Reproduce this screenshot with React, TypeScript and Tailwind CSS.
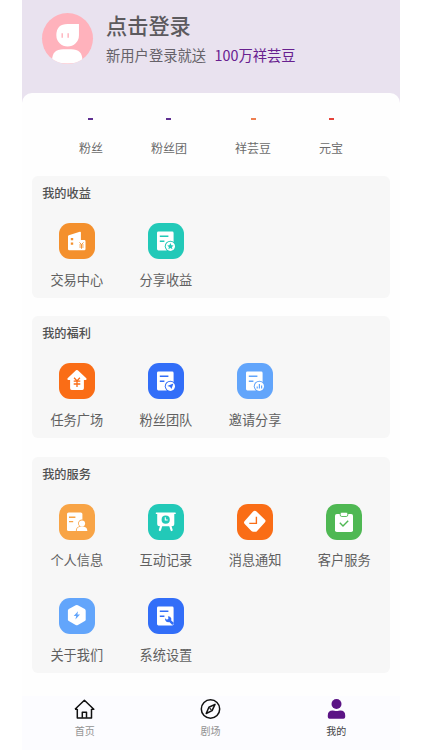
import type { ReactNode } from 'react';
import clsx from 'clsx';

type Entry = {
  label: string;
  color: string;
  icon: ReactNode;
};

type Section = {
  title: string;
  className: string;
  entries: Entry[];
};

const stats = [
  { label: '粉丝', color: 'bg-[#5f2f91]' },
  { label: '粉丝团', color: 'bg-[#5f2f91]' },
  { label: '祥芸豆', color: 'bg-[#ee7f50]' },
  { label: '元宝', color: 'bg-[#e5433a]' },
];

// Sheet of paper with two text lines; shared by most of the tiles.
function Sheet({ children }: { children?: ReactNode }) {
  return (
    <>
      <rect x="9" y="8.5" width="16.6" height="18.9" rx="1.4" fill="#fff" />
      <path d="M11.8 13.2h8.6M11.8 18.2h4.6" stroke="currentColor" strokeWidth="1.4" />
      {children}
    </>
  );
}

function Badge({ children }: { children: ReactNode }) {
  return (
    <>
      <circle cx="22.4" cy="23.3" r="5.6" fill="currentColor" />
      <circle cx="22.4" cy="23.3" r="4.6" fill="#fff" />
      {children}
    </>
  );
}

const sections: Section[] = [
  {
    title: '我的收益',
    className: 'h-[122px]',
    entries: [
      {
        label: '交易中心',
        color: 'text-[#f4902d]',
        icon: (
          <>
            <path
              d="M9 13.3q0-.8.8-1.1l11-3.5q1.1-.3 1.1.9V17h3.4q1.2 0 1.2 1.2V26q0 1.2-1.2 1.2H10.2Q9 27.2 9 26z"
              fill="#fff"
            />
            <path d="M11.8 15h2.4v2.2h-2.4zM11.8 19.4h2.4v2.4h-2.4z" fill="currentColor" />
            <path
              d="M20.5 19.4l2 2.2 2-2.2M22.5 21.6v4.2M20.3 22h4.4M20.3 24h4.4"
              stroke="currentColor"
              strokeWidth=".9"
            />
          </>
        ),
      },
      {
        label: '分享收益',
        color: 'text-[#22c9b8]',
        icon: (
          <Sheet>
            <Badge>
              <path
                d="M22.4 20.1l1 2.1 2.2.2-1.7 1.5.5 2.3-2-1.2-2 1.2.5-2.3-1.7-1.5 2.2-.2z"
                fill="currentColor"
              />
            </Badge>
          </Sheet>
        ),
      },
    ],
  },
  {
    title: '我的福利',
    className: 'h-[122px]',
    entries: [
      {
        label: '任务广场',
        color: 'text-[#fa6d16]',
        icon: (
          <>
            <path
              d="M17 7.3q.9-.8 1.8 0l8.5 8q1 1.4-.5 1.6h-1.9v8.4q0 1.6-1.6 1.6H12.7q-1.6 0-1.6-1.6v-8.4H9.2q-1.6-.2-.6-1.6z"
              fill="#fff"
            />
            <path
              d="M15.1 14.7l2.9 3.2 2.9-3.2M18 17.9v6.2M14.7 18.1h6.6M14.7 21h6.6"
              stroke="currentColor"
              strokeWidth="1.3"
            />
          </>
        ),
      },
      {
        label: '粉丝团队',
        color: 'text-[#326ef8]',
        icon: (
          <Sheet>
            <Badge>
              <path d="M25.4 20.5l-1.9 5.6-1.5-2.4-2.8-.8z" fill="currentColor" />
            </Badge>
          </Sheet>
        ),
      },
      {
        label: '邀请分享',
        color: 'text-[#62a5fb]',
        icon: (
          <Sheet>
            <Badge>
              <path d="M20.2 25.5v-2M22.4 25.5v-4.6M24.6 25.5v-2.9" stroke="currentColor" strokeWidth="1.2" />
            </Badge>
          </Sheet>
        ),
      },
    ],
  },
  {
    title: '我的服务',
    className: 'h-[216px]',
    entries: [
      {
        label: '个人信息',
        color: 'text-[#f8a446]',
        icon: (
          <>
            <rect x="8" y="8.4" width="15.4" height="18.6" rx="1.6" fill="#fff" />
            <path d="M10 13.2h6.4M10 17.6h4.2" stroke="currentColor" strokeWidth="1.4" />
            <path d="M20.4 22.3a3.9 3.9 0 1 1 5.2 0q3 .9 3 5.2H16.8q0-4.3 3.6-5.2z" fill="currentColor" />
            <circle cx="23" cy="19.6" r="3.1" fill="#fff" />
            <path d="M17.7 27q0-3.9 3.3-4.2h4q3.3.3 3.3 4.2z" fill="#fff" />
          </>
        ),
      },
      {
        label: '互动记录',
        color: 'text-[#22c9b8]',
        icon: (
          <>
            <path
              d="M8.3 8.4h18.9q.6 0 .6.8t-.6.9h-.9v9.7q0 2.5-2.5 2.5H11.7q-2.5 0-2.5-2.5v-9.7h-.9q-.6-.1-.6-.9t.6-.8z"
              fill="#fff"
            />
            <path d="M13.3 21.5L11.9 26M22.2 21.5l1.4 4.5" stroke="#fff" strokeWidth="2.2" strokeLinecap="round" />
            <circle cx="17.7" cy="15.7" r="4.1" fill="currentColor" />
            <path d="M17.3 13.3V16h2.4" stroke="#fff" strokeWidth="1.1" />
          </>
        ),
      },
      {
        label: '消息通知',
        color: 'text-[#fa6d16]',
        icon: (
          <>
            <path
              d="M16.1 7.6q1.7-1.6 3.4 0l8.5 8.2q1.1 1.2 0 2.4l-7.9 8.7q-.7.9-1.8.9h-2.1q-1 0-1.8-.8l-6.7-7.1q-1.4-1.4 0-3z"
              fill="#fff"
            />
            <path d="M19.4 12.8v6.6h-7.1" stroke="currentColor" strokeWidth="1.4" />
          </>
        ),
      },
      {
        label: '客户服务',
        color: 'text-[#4fb853]',
        icon: (
          <>
            <rect x="9" y="10" width="18" height="18" rx="1.8" fill="#fff" />
            <rect x="14.2" y="8.2" width="7.6" height="4.3" rx="1.6" fill="#fff" stroke="currentColor" strokeWidth=".9" />
            <path d="M13.8 18.8L17 22l5.2-5.2" stroke="currentColor" strokeWidth="1.4" />
          </>
        ),
      },
      {
        label: '关于我们',
        color: 'text-[#62a5fb]',
        icon: (
          <>
            <path
              d="M16.7 7.2q1.1-.6 2.2 0l6.9 3.9q.9.6.9 1.7v8.6q0 1.1-.9 1.7L18.9 27q-1.1.6-2.2 0l-6.9-3.9q-.9-.6-.9-1.7v-8.6q0-1.1.9-1.7z"
              fill="#fff"
            />
            <path d="M19 13.2L14.7 18h2.5l-.8 3.5 4.6-5h-2.6z" fill="currentColor" />
          </>
        ),
      },
      {
        label: '系统设置',
        color: 'text-[#326ef8]',
        icon: (
          <Sheet>
            <path d="M20.5 21.7l4.7 4.3" stroke="currentColor" strokeWidth="2.4" />
            <path
              d="M17 20.2l2 1.5 1.5-1.2-.6-2.2q2.8.1 3.4 2.2.5 2.1-1.3 3.2-2.1 1.1-3.9-.3-1.3-1.2-1.1-3.2z"
              fill="currentColor"
            />
          </Sheet>
        ),
      },
    ],
  },
];

const tabs = [
  {
    label: '首页',
    active: false,
    icon: (
      <g stroke="#111" strokeWidth="1.5" strokeLinejoin="round">
        <path d="M3.3 10v9h14.2v-9M1 10.3l9.4-9.1 9.4 9.1h-2.3M1 10.3h2.3" />
        <path d="M8.3 18.8v-5.6h4.2v5.6" />
      </g>
    ),
  },
  {
    label: '剧场',
    active: false,
    icon: (
      <g stroke="#111" strokeWidth="1.5" strokeLinejoin="round">
        <circle cx="10.5" cy="10" r="9.2" />
        <path d="M15 5.4l-2.9 6.2-5.9 2.9 2.7-6.2z" />
        <path d="M9.6 9.1l1.8 1.8" strokeWidth="1.2" />
      </g>
    ),
  },
  {
    label: '我的',
    active: true,
    icon: (
      <g fill="#5b1485">
        <circle cx="10.5" cy="5" r="5" />
        <path d="M1.8 18v-1.7q0-4.9 4.9-4.9.9 0 1.6.3 2.2.7 4.4 0 .7-.3 1.6-.3 4.9 0 4.9 4.9V18q0 1.8-1.8 1.8H3.6Q1.8 19.8 1.8 18z" />
      </g>
    ),
  },
];

function Avatar() {
  return (
    <svg viewBox="0 0 50 50" className="h-[50.5px] w-[50.5px] shrink-0 rounded-full bg-[#ffb2bc]">
      <path d="M14.2 22q0-11.2 11.2-11.2h11.2V22a11.2 11.2 0 0 1-22.4 0z" fill="#fff" />
      <path d="M20 20v4.6M25.9 20v4.6" stroke="#ffb2bc" strokeWidth="1.4" />
      <path d="M10 50v-3q0-11 11-11h8q11 0 11 11v3z" fill="#fff" />
    </svg>
  );
}

function EntryTile({ label, color, icon }: Entry) {
  return (
    <div className="flex h-[94.5px] flex-col items-center">
      <svg viewBox="0 0 36 36" fill="none" className={clsx('h-9 w-9', color)}>
        <rect width="36" height="36" rx="11" fill="currentColor" />
        {icon}
      </svg>
      <span className="mt-[10.6px] text-[13.2px] leading-5 text-[#606060]">{label}</span>
    </div>
  );
}

export default function App() {
  return (
    <div className="flex h-[750px] w-[422px] justify-center overflow-hidden bg-white font-['Noto_Sans_CJK_SC',sans-serif]">
      <div className="flex w-[378px] flex-col bg-[#e9e2ef]">
        <header className="flex h-[93px] shrink-0 gap-[13.5px] pt-[13px] pl-5">
          <Avatar />
          <div className="-mt-px">
            <h1 className="text-[21.2px] leading-[26px] font-medium text-[#5c5a5e]">点击登录</h1>
            <p className="mt-[7px] flex gap-[8.5px] text-[14.3px] leading-5 text-[#666269]">
              <span>新用户登录就送</span>
              <span className="text-[#68208f]">100万祥芸豆</span>
            </p>
          </div>
        </header>

        <main className="flex min-h-0 flex-1 flex-col rounded-t-[10px] bg-[#fefefe]">
          <div className="flex h-[83px] shrink-0 justify-center gap-12 pt-[25px]">
            {stats.map((stat) => (
              <div key={stat.label} className="flex flex-col items-center">
                <span className={clsx('h-[2px] w-[5px]', stat.color)} />
                <span className="mt-[18px] text-xs leading-5 text-[#6c6c6c]">{stat.label}</span>
              </div>
            ))}
          </div>

          <div className="flex flex-1 flex-col gap-[18.4px] px-[10.2px]">
            {sections.map((section) => (
              <section key={section.title} className={clsx('shrink-0 rounded-md bg-[#f7f7f7]', section.className)}>
                <h2 className="pt-[7px] pl-[10px] text-[12.2px] leading-5 font-medium text-[#505050]">
                  {section.title}
                </h2>
                <div className="mt-5 grid grid-cols-4 pr-px">
                  {section.entries.map((entry) => (
                    <EntryTile key={entry.label} {...entry} />
                  ))}
                </div>
              </section>
            ))}
          </div>

          <nav className="grid h-[54px] shrink-0 grid-cols-3 bg-[#fcfcff] pt-[3px] pr-px">
            {tabs.map((tab) => (
              <div key={tab.label} className="flex flex-col items-center">
                <svg viewBox="0 0 21 20" fill="none" className="h-5 w-[21px]">
                  {tab.icon}
                </svg>
                <span
                  className={clsx('mt-[5px] text-[10px] leading-[14px]', tab.active ? 'text-[#444]' : 'text-[#929292]')}
                >
                  {tab.label}
                </span>
              </div>
            ))}
          </nav>
        </main>
      </div>
    </div>
  );
}
